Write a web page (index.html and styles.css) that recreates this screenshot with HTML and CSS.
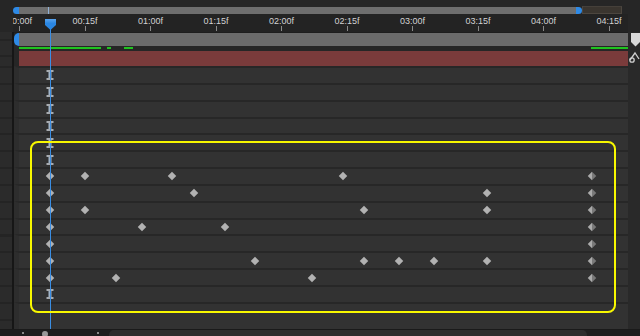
FILE: index.html
```html
<!DOCTYPE html>
<html lang="en">
<head>
    <meta charset="UTF-8">
    <title>Timeline</title>
    <link rel="stylesheet" href="styles.css">
</head>
<body>

<div class="timeline">

    <!-- navigator -->
    <div class="nav">
        <span class="nav-cap"></span>
        <div class="nav-fill"><span class="nav-cti"></span></div>
        <span class="nav-cap right"></span>
        <div class="nav-rest"></div>
    </div>

    <!-- time ruler -->
    <div class="ruler">
        <div class="scale">
            <span class="mark">00:00f</span>
            <span class="mark">00:15f</span>
            <span class="mark">01:00f</span>
            <span class="mark">01:15f</span>
            <span class="mark">02:00f</span>
            <span class="mark">02:15f</span>
            <span class="mark">03:00f</span>
            <span class="mark">03:15f</span>
            <span class="mark">04:00f</span>
            <span class="mark">04:15f</span>
        </div>
    </div>

    <div class="main">
        <div class="gutter"></div>
        <div class="split"></div>

        <div class="tracks">
            <div class="workarea">
                <span class="wa-cap"></span>
                <div class="wa-bar"></div>
            </div>

            <div class="cache">
                <span class="seg" style="left:0;width:82px"></span>
                <span class="seg" style="left:88px;width:4px"></span>
                <span class="seg" style="left:105px;width:9px"></span>
                <span class="seg" style="left:572px;width:37px"></span>
            </div>

            <div class="layer"><div class="layer-bar"></div></div>

            <div class="rows">
                <div class="row"><span class="hold" style="--f:7"></span></div>
                <div class="row"><span class="hold" style="--f:7"></span></div>
                <div class="row"><span class="hold" style="--f:7"></span></div>
                <div class="row"><span class="hold" style="--f:7"></span></div>
                <div class="row"><span class="hold" style="--f:7"></span></div>
                <div class="row"><span class="hold" style="--f:7"></span></div>
                <div class="row">
                    <span class="key" style="--f:7"></span>
                    <span class="key" style="--f:15"></span>
                    <span class="key" style="--f:35"></span>
                    <span class="key" style="--f:74"></span>
                    <span class="key end" style="--f:131"></span>
                </div>
                <div class="row">
                    <span class="key" style="--f:7"></span>
                    <span class="key" style="--f:40"></span>
                    <span class="key" style="--f:107"></span>
                    <span class="key end" style="--f:131"></span>
                </div>
                <div class="row">
                    <span class="key" style="--f:7"></span>
                    <span class="key" style="--f:15"></span>
                    <span class="key" style="--f:79"></span>
                    <span class="key" style="--f:107"></span>
                    <span class="key end" style="--f:131"></span>
                </div>
                <div class="row">
                    <span class="key" style="--f:7"></span>
                    <span class="key" style="--f:28"></span>
                    <span class="key" style="--f:47"></span>
                    <span class="key end" style="--f:131"></span>
                </div>
                <div class="row">
                    <span class="key" style="--f:7"></span>
                    <span class="key end" style="--f:131"></span>
                </div>
                <div class="row">
                    <span class="key" style="--f:7"></span>
                    <span class="key" style="--f:54"></span>
                    <span class="key" style="--f:79"></span>
                    <span class="key" style="--f:87"></span>
                    <span class="key" style="--f:95"></span>
                    <span class="key" style="--f:107"></span>
                    <span class="key end" style="--f:131"></span>
                </div>
                <div class="row">
                    <span class="key" style="--f:7"></span>
                    <span class="key" style="--f:22"></span>
                    <span class="key" style="--f:67"></span>
                    <span class="key end" style="--f:131"></span>
                </div>
                <div class="row"><span class="hold" style="--f:7"></span></div>
                <div class="row filler"></div>
            </div>
        </div>

        <div class="rail">
            <svg class="rail-marker" width="9" height="14" viewBox="0 0 9 14">
                <polygon points="0,0 9,0 9,9 4.5,13.5 0,9" fill="#d9d9d9"/>
            </svg>
            <svg class="rail-blur" width="12" height="13" viewBox="0 0 12 13">
                <path d="M2 9 L7 2 L11 8" fill="none" stroke="#cfcfcf" stroke-width="1.3"/>
                <circle cx="4" cy="9" r="2.2" fill="none" stroke="#cfcfcf" stroke-width="1.3"/>
            </svg>
        </div>
    </div>

    <div class="footer">
        <span class="f-dot"></span>
        <span class="f-knob"></span>
        <span class="f-dot last"></span>
        <div class="f-scroll"></div>
    </div>

    <!-- current time indicator -->
    <div class="cti"></div>

    <!-- highlight -->
    <div class="callout"></div>
</div>

</body>
</html>
```

FILE: styles.css
```css
body {
    margin: 0;
    background-color: #262626;
    font-family: "Liberation Sans", Arial, sans-serif;
}
.timeline {
    position: relative;
    width: 640px;
    height: 336px;
    overflow: hidden;
    background-color: #262626;
}

/* navigator */
.nav {
    display: flex;
    height: 14px;
    padding: 7px 18px 0 13px;
    box-sizing: border-box;
}
.nav-cap {
    width: 6px;
    background-color: #2e8ae6;
    border-radius: 4px 0 0 4px;
}
.nav-cap.right {
    border-radius: 0 4px 4px 0;
}
.nav-fill {
    position: relative;
    width: 557px;
    background-color: #6e6e6e;
}
.nav-cti {
    position: absolute;
    left: 29px;
    top: 0;
    width: 1px;
    height: 100%;
    background-color: #8fb0d4;
}
.nav-rest {
    flex: 1;
    background-color: #3a352f;
    border: 1px solid #4c463f;
    border-top-color: #45403a;
    margin-top: -1px;
}

/* ruler */
.ruler {
    height: 18px;
    margin-left: 13px;
    width: 615px;
    overflow: hidden;
    background-color: #232323;
}
.scale {
    display: flex;
    margin-left: -26.25px;
}
.mark {
    position: relative;
    flex: 0 0 65.5px;
    height: 18px;
    padding-top: 2px;
    box-sizing: border-box;
    text-align: center;
    font-size: 9px;
    line-height: 10px;
    color: #d2d2d2;
}
.mark::after {
    content: "";
    position: absolute;
    left: 32.5px;
    top: 12px;
    width: 1px;
    height: 5px;
    background-color: #8a8a8a;
}

/* main area */
.main {
    display: flex;
    height: 297px;
}
.gutter {
    width: 12px;
    background: repeating-linear-gradient(#242424 0 2px, #2b2b2b 2px 16.85px);
    background-position: 0 34px;
}
.split {
    width: 2px;
    background-color: #161616;
}
.tracks {
    flex: 1;
    display: flex;
    flex-direction: column;
}
.workarea {
    display: flex;
    height: 14px;
    border-top: 1px solid #1e1e1e;
    box-sizing: border-box;
}
.wa-cap {
    width: 5px;
    background-color: #2e8ae6;
    border-radius: 7px 0 0 7px;
}
.wa-bar {
    flex: 1;
    background-color: #6b6b6b;
}
.cache {
    position: relative;
    height: 4px;
    margin-left: 5px;
}
.seg {
    position: absolute;
    top: 1px;
    height: 2px;
    background-color: #1fc41f;
}
.layer {
    height: 16px;
    padding: 1px 0 0 5px;
    box-sizing: border-box;
}
.layer-bar {
    height: 15px;
    background-color: #7a3b3b;
}
.rows {
    flex: 1;
    display: flex;
    flex-direction: column;
}
.row {
    position: relative;
    height: 16.85px;
    box-sizing: border-box;
    border-top: 2px solid #272727;
    border-left: 5px solid #2d2d2d;
    background-color: #323232;
}
.row.filler {
    flex: 1;
}

/* keyframes */
.key, .hold {
    position: absolute;
    top: 50%;
    left: calc(0.5px + var(--f) * 4.3667px);
}
.key {
    width: 6px;
    height: 6px;
    background-color: #b2b2b2;
    transform: translate(-50%, -50%) rotate(45deg);
}
.key.end {
    background: linear-gradient(to top right, #ababab 50%, #797979 50%);
}
.hold {
    width: 7px;
    height: 10px;
    box-sizing: border-box;
    border-top: 2px solid #a7abb0;
    border-bottom: 2px solid #a7abb0;
    transform: translate(-50%, -50%);
}
.hold::before {
    content: "";
    position: absolute;
    left: 2px;
    top: 0;
    width: 3px;
    height: 100%;
    background-color: #9fb3c8;
}

/* right rail */
.rail {
    width: 12px;
    display: flex;
    flex-direction: column;
    align-items: flex-end;
    background-color: #292929;
}
.rail-marker {
    margin-top: 1px;
}
.rail-blur {
    margin-top: 4px;
}

/* footer */
.footer {
    display: flex;
    align-items: flex-start;
    height: 7px;
    background-color: #1f1f1f;
    border-top: 1px solid #1a1a1a;
}
.f-dot {
    width: 2px;
    height: 2px;
    margin: 2px 0 0 22px;
    background-color: #8a8a8a;
}
.f-knob {
    width: 6px;
    height: 6px;
    margin: 1px 0 0 18px;
    border-radius: 50%;
    background-color: #9a9a9a;
}
.f-dot.last {
    margin-left: 49px;
}
.f-scroll {
    width: 478px;
    height: 7px;
    margin-left: 10px;
    background-color: #2d2d2d;
    border-radius: 5px 5px 0 0;
}

/* current time indicator */
.cti {
    position: absolute;
    left: 50px;
    top: 20px;
    bottom: 7px;
    width: 1px;
    background-color: #3a8ee4;
    z-index: 2;
}
.cti::before {
    content: "";
    position: absolute;
    left: -5px;
    top: -1px;
    width: 11px;
    height: 11px;
    background: linear-gradient(#5aa4ee, #2a86e2 40%);
    clip-path: polygon(0 0, 100% 0, 100% 55%, 50% 100%, 0 55%);
}

.callout {
    position: absolute;
    left: 30px;
    top: 141px;
    width: 586px;
    height: 172px;
    box-sizing: border-box;
    border: 2px solid #f8f800;
    border-radius: 8px;
    z-index: 3;
}
```
